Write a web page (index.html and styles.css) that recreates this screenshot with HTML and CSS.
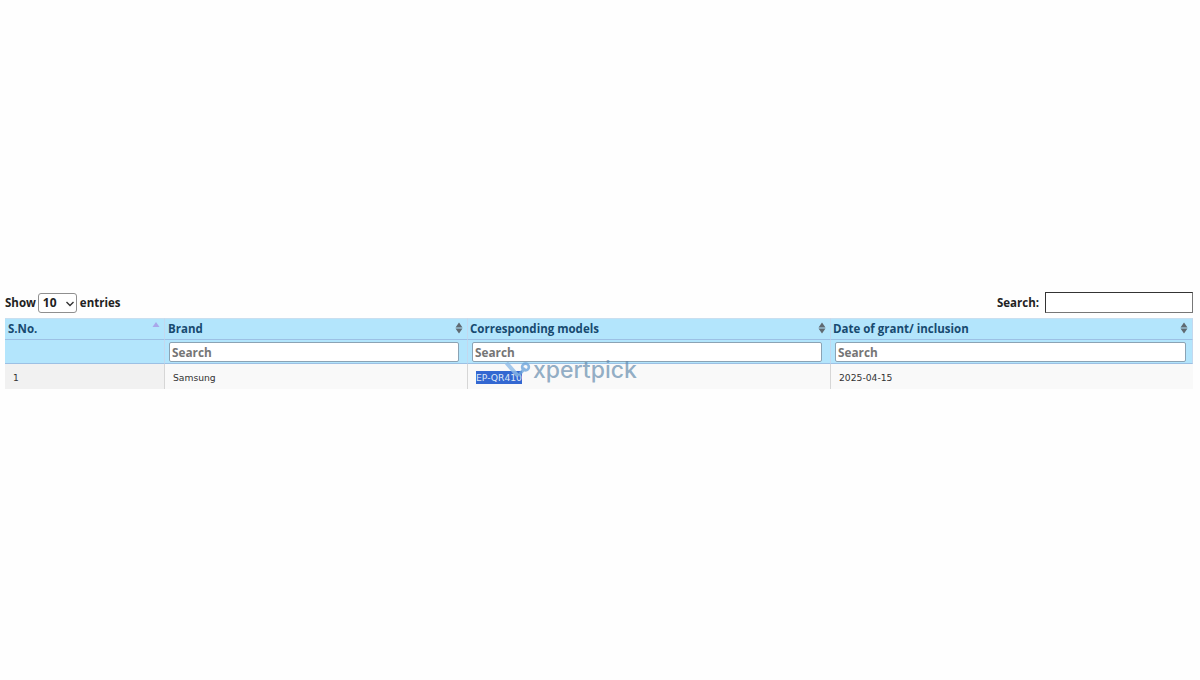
FILE: index.html
```html
<!DOCTYPE html>
<html lang="en">
<head>
<meta charset="utf-8">
<title>Corresponding models</title>
<link rel="stylesheet" href="styles.css">
</head>
<body>
<main class="wrapper">
  <div class="controls">
    <label class="length">Show
      <select class="length-select"><option>10</option><option>25</option><option>50</option></select>
      entries</label>
    <label class="filter">Search: <input class="filter-input" type="search"></label>
  </div>
  <table class="data">
    <colgroup><col class="c1"><col class="c2"><col class="c3"><col class="c4"></colgroup>
    <thead>
      <tr class="head">
        <th><div class="th-in"><span>S.No.</span>
          <svg class="sort" width="8" height="12" viewBox="0 0 8 12"><path class="up-active" d="M4 1 7.5 6H.5z"/></svg></div></th>
        <th><div class="th-in"><span>Brand</span>
          <svg class="sort" width="8" height="12" viewBox="0 0 8 12"><path d="M4 .5 7.5 5.4H.5zM4 11.5 .5 6.6h7z"/></svg></div></th>
        <th><div class="th-in"><span>Corresponding models</span>
          <svg class="sort" width="8" height="12" viewBox="0 0 8 12"><path d="M4 .5 7.5 5.4H.5zM4 11.5 .5 6.6h7z"/></svg></div></th>
        <th><div class="th-in"><span>Date of grant/ inclusion</span>
          <svg class="sort" width="8" height="12" viewBox="0 0 8 12"><path d="M4 .5 7.5 5.4H.5zM4 11.5 .5 6.6h7z"/></svg></div></th>
      </tr>
      <tr class="search-row">
        <th></th>
        <th><input class="col-search" placeholder="Search"></th>
        <th><input class="col-search" placeholder="Search"></th>
        <th><input class="col-search" placeholder="Search"></th>
      </tr>
    </thead>
    <tbody>
      <tr>
        <td class="sorted">1</td>
        <td>Samsung</td>
        <td><span class="selected">EP-QR410</span></td>
        <td>2025-04-15</td>
      </tr>
    </tbody>
  </table>
</main>
<div class="watermark">
  <svg class="wm-logo" width="26" height="16" viewBox="0 0 26 16"><path d="M1.5 1 13 14" fill="none" stroke="#8fbce8" stroke-width="4"/><path d="M13 14 20 6" fill="none" stroke="#6fa6dc" stroke-width="3.4"/><circle cx="20.5" cy="5" r="3.4" fill="none" stroke="#6fa6dc" stroke-width="2.6"/></svg>
  <span>xpertpick</span>
</div>
</body>
</html>
```

FILE: styles.css
```css
html, body {
  margin: 0;
  height: 680px;
  background: #fefefe;
  overflow: hidden;
}

.wrapper {
  padding: 292px 7px 0 5px;
  font-family: "Open Sans", "Noto Sans", sans-serif;
  color: #222;
}

.controls {
  display: flex;
  justify-content: space-between;
  align-items: center;
  height: 21px;
  margin-bottom: 5px;
  font-size: 11.5px;
  font-weight: 700;
}

.length,
.filter {
  display: flex;
  align-items: center;
  gap: 2px;
}

.filter {
  gap: 6px;
}

.length-select {
  appearance: none;
  width: 39px;
  height: 20px;
  padding: 0 0 0 4px;
  margin-right: 1px;
  font: 700 12px "Open Sans", sans-serif;
  color: #222;
  border: 1px solid #8f8f8f;
  border-radius: 3px;
  background: #fff url("data:image/svg+xml,%3Csvg xmlns='http://www.w3.org/2000/svg' width='10' height='6'%3E%3Cpath d='M1.5 1 5 4.5 8.5 1' fill='none' stroke='%23333' stroke-width='1.4'/%3E%3C/svg%3E") no-repeat 26px 7px;
}

.filter-input {
  width: 148px;
  height: 21px;
  padding: 0;
  box-sizing: border-box;
  background: #fff;
  border: 1px solid #333;
  border-radius: 0;
  border-bottom-color: #777;
  border-right-color: #777;
}

.data {
  width: 1188px;
  table-layout: fixed;
  border-collapse: separate;
  border-spacing: 0;
}

.c1 { width: 160px; }
.c2 { width: 303px; }
.c3 { width: 363px; }
.c4 { width: 362px; }

.head th {
  height: 18px;
  padding: 0 4px 2px 3px;
  background: #b3e5fc;
  border-top: 1px solid #c8dff0;
  border-bottom: 1px solid #9cc0e4;
  border-right: 1px solid #c3d8ee;
  text-align: left;
  font-size: 11.5px;
  font-weight: 700;
  color: #174a70;
}

.head th:nth-child(n+3) {
  padding-left: 2px;
}

.th-in {
  display: flex;
  justify-content: space-between;
  align-items: center;
}

.sort {
  fill: #5f6a72;
}

.sort .up-active {
  fill: #a9a6ea;
  transform: translateY(-1px);
}

.search-row th {
  height: 23px;
  padding: 0 4px;
  background: #b3e5fc;
  border-right: 1px solid #c3d8ee;
  border-bottom: 1px solid #9cc0e4;
  text-align: left;
}

.col-search {
  display: block;
  width: 100%;
  max-width: 290px;
  height: 20px;
  padding: 1px 2px 0;
  box-sizing: border-box;
  font: 700 11.8px "Open Sans", sans-serif;
  background: #fff;
  border: 1px solid #8ba3b4;
  border-radius: 2px;
}

.search-row th:nth-child(3) .col-search { max-width: 350px; }
.search-row th:nth-child(4) .col-search { max-width: 351px; }

.col-search::placeholder {
  color: #757575;
  opacity: 1;
}

.data td {
  height: 25px;
  padding: 2px 8px 0;
  box-sizing: border-box;
  background: #f9f9f9;
  border-right: 1px solid #d6d6d6;
  font: 9.2px "DejaVu Sans", sans-serif;
  color: #333;
}

.data td:last-child { border-right: 0; }

.data td.sorted {
  background: #f1f1f1;
}

.selected {
  background: #3367d1;
  color: #dfe7f5;
  padding: 1px 0;
}

.watermark {
  position: absolute;
  left: 505px;
  top: 356px;
  display: flex;
  gap: 2px;
  font: 500 23px "Inter", "Open Sans", sans-serif;
  color: rgba(95, 135, 170, 0.68);
}

.wm-logo {
  margin-top: 6px;
  opacity: 0.8;
}
```
